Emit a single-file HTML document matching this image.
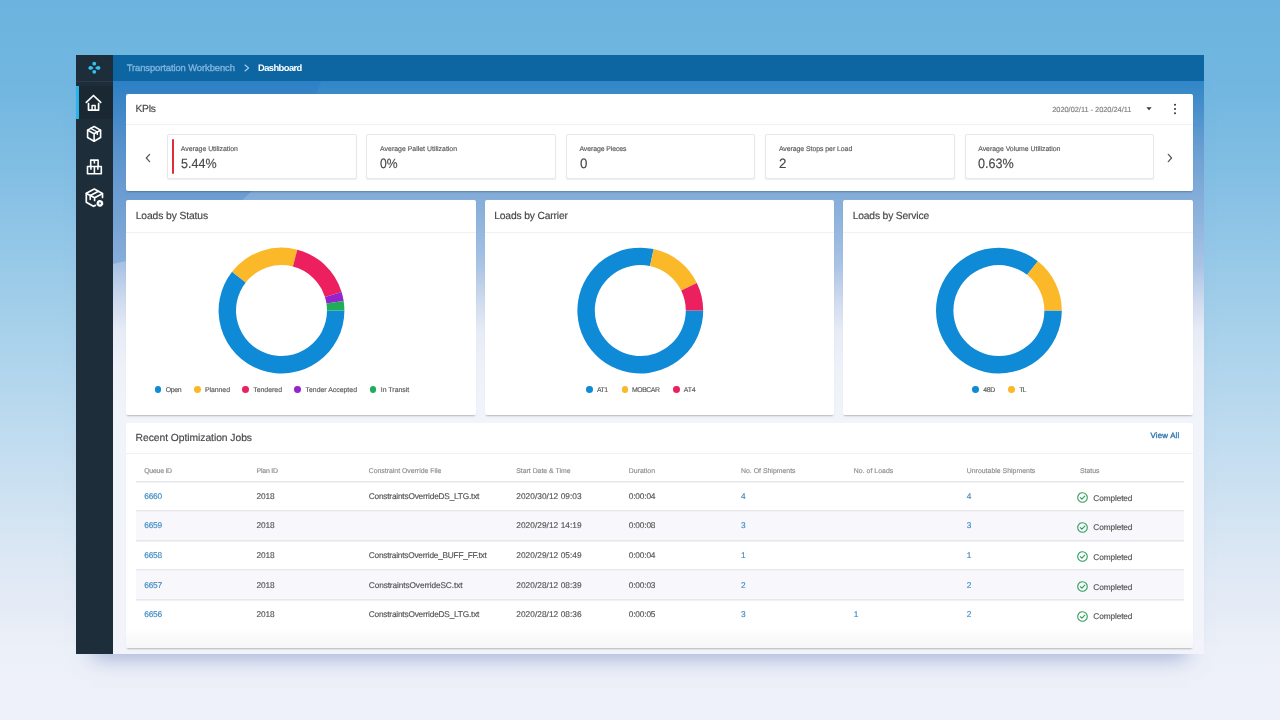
<!DOCTYPE html>
<html lang="en"><head><meta charset="utf-8"><title>Transportation Workbench - Dashboard</title><style>
*{box-sizing:border-box;margin:0;padding:0}
html,body{width:1280px;height:720px;overflow:hidden}
body{font-family:'Liberation Sans',sans-serif;background:linear-gradient(180deg,#6cb4df 0px,#70b6e0 80px,#84bfe4 180px,#99cae8 270px,#aed4ec 360px,#c3ddf0 450px,#d8e6f3 540px,#e4ebf6 600px,#ecf0f8 650px,#eff1fa 720px);position:relative;-webkit-font-smoothing:antialiased}
.app{position:absolute;will-change:transform;box-shadow:0 21px 20px -17px rgba(104,124,190,.55)}
.sidebar{position:absolute;left:0;top:0;bottom:0;background:#1d2d3a;z-index:2}
.logo{position:absolute;left:0;top:0;width:37px;height:27px;border-bottom:1px solid #2c3a48}
.nav{position:absolute;left:0;width:37px;height:33px;display:block}
.nav svg{position:absolute;left:0;top:0}
.nav.active{background:#1a2833}
.nav.active:before{content:"";position:absolute;left:0;top:0;width:3px;height:33px;background:#27b5ea}
.topbar{position:absolute;top:0;right:0;background:#0d65a2;box-shadow:0 1px 0 rgba(13,101,162,.3)}
.main{position:absolute;right:0;bottom:0;overflow:hidden;background:linear-gradient(180deg,#3087c8 0px,#3b8ac8 13px,#6b9fd2 69px,#80abd8 109px,#94b7de 149px,#a9c3e5 184px,#cedaee 219px,#e6ebf6 249px,#eff1f9 284px,#f2f4fb 339px,#f3f4fb 573px)}
.blob{position:absolute;left:-328px;top:-362px;width:550px;height:550px;border-radius:50%;background:rgba(38,108,190,.24)}
.card{position:absolute;background:#fff;border-radius:2px;box-shadow:0 2px 2px -1px rgba(0,0,0,.26)}
.card h2,.card span,.card a,.topbar span{position:absolute;white-space:pre;font-weight:400;text-decoration:none;text-rendering:geometricPrecision}
.tcard{background:linear-gradient(180deg,#fff 0,#fff 205px,#f6f6f7 100%)}
.abs{position:absolute}
.card span,.card a,.card h2{-webkit-text-stroke:.16px currentColor}
.med,.card .med{-webkit-text-stroke:.35px currentColor}
.hr{position:absolute;left:0;right:0;height:1px;background:#f0f1f3}
.tile{position:absolute;background:#fff;border:1px solid #e7e8ea;border-radius:2px;box-shadow:0 1px 1.5px rgba(0,0,0,.08)}
.bar{position:absolute;left:4px;top:3.8px;width:2px;height:35px;background:#e02c3c;border-radius:1px}
.donut{position:absolute;left:0;top:0}
.legend{list-style:none}
.dot{position:absolute;width:6.8px;height:6.8px;border-radius:50%}
.table{position:absolute}
.thead{position:absolute;left:0;top:0;right:0;border-bottom:1px solid #e8e8ec}
.tr{position:absolute;left:0;right:0;border-bottom:1px solid #e8e8ec;box-shadow:inset 0 1px 0 #f1f1f4}
.tr.alt{background:#f8f8fc}
.tr.last{border-bottom:0}
</style></head><body><div class="app" style="left:76px;top:55px;width:1128px;height:599px"><aside class="sidebar" style="width:37px"><div class="logo"><svg width="37" height="26" viewBox="0 0 37 26"><g fill="#35c3ee" transform="translate(0 .3)"><circle cx="18.25" cy="8.4" r="1.9"/><circle cx="18.25" cy="16.5" r="1.9"/><path d="M12.4 12.6c0-1.1 .9-1.9 2-1.9c1.2 0 2.2 1 3.1 1.9c-.9 .9-1.9 1.9-3.1 1.9c-1.1 0-2-.8-2-1.9z"/><path d="M24.4 12.6c0-1.1-.9-1.9-2-1.9c-1.2 0-2.3 1-3.3 1.9c1 .9 2.1 1.9 3.3 1.9c1.1 0 2-.8 2-1.9z"/></g></svg></div><nav><a class="nav active" style="top:31px"><svg width="37" height="33" viewBox="0 0 37 33" fill="none" stroke="#fff" stroke-width="1.7" stroke-linecap="round" stroke-linejoin="round"><path d="M10.3 16.4L17.5 9.5L24.7 16.4"/><path d="M12.5 17.6V24.1H22.6V17.6"/><path d="M16.1 24V19.6H19.1V24" stroke-width="1.5"/></svg></a><a class="nav" style="top:62px"><svg width="37" height="33" viewBox="0 0 37 33" fill="none" stroke="#fff" stroke-width="1.6" stroke-linecap="round" stroke-linejoin="round"><path d="M18.1 9.5L24.6 13.1V20.5L18.1 24.2L11.6 20.5V13.1Z"/><path d="M11.8 13.2L18.1 16.8L24.4 13.2M18.1 16.8V24"/><path d="M14.7 11.3L21.3 15V17.4" stroke-width="1.4"/></svg></a><a class="nav" style="top:94px"><svg width="37" height="33" viewBox="0 -0.2 37 33" fill="none" stroke="#fff" stroke-width="1.6" stroke-linejoin="round"><path d="M14.7 17.2V10.9H22.1V17.2"/><path d="M11.5 17.3H25.3V24.5H11.5Z"/><path d="M18.4 17.3V24.5"/><path d="M18.4 10.9V14.2M14.95 17.3V20.6M21.85 17.3V20.6" stroke-width="1.6"/></svg></a><a class="nav" style="top:125px"><svg width="37" height="35" viewBox="0 0 37 35" fill="none" stroke="#fff" stroke-width="1.7" stroke-linecap="round" stroke-linejoin="round"><path d="M19.4 25.4L17.4 26.3L10.3 22.3V13.2L18.3 9.1L26.5 13.5V17.4"/><path d="M10.5 13.4L18.6 17.8L26.3 13.7M18.6 17.8V20.4"/><path d="M14.4 15.5L22.4 11.3"/><path d="M14.2 16.6V19.6" stroke-width="1.5"/><circle cx="23.9" cy="23.4" r="2.5" fill="#fff" stroke="#fff" stroke-width="1.8" stroke-dasharray="1.3 .9"/><circle cx="23.9" cy="23.4" r="1.15" fill="#56616c" stroke="none"/></svg></a></nav></aside><header class="topbar" style="left:37px;height:26px"><span class="med" style="left:13.75px;top:6px;font-size:9.4px;line-height:14px;color:#7fb4dc;letter-spacing:-0.08px;">Transportation Workbench</span><svg class="abs" width="8" height="10" viewBox="0 0 8 10" style="left:129.6px;top:7.5px"><path d="M2 2L5.6 5L2 8" fill="none" stroke="#a9cde9" stroke-width="1.1" stroke-linecap="round" stroke-linejoin="round"/></svg><span style="left:145px;top:6px;font-size:9.4px;line-height:14px;color:#ffffff;font-weight:700;letter-spacing:-0.58px;">Dashboard</span></header><main class="main" style="left:37px;top:26px"><div class="blob"></div><section class="card" style="left:13px;top:13px;width:1067px;height:97px"><h2 style="left:9.6px;top:8px;font-size:10.3px;line-height:15px;color:#484848;letter-spacing:-0.45px;">KPIs</h2><span style="left:926.2px;top:10px;font-size:7.4px;line-height:11px;color:#828282;letter-spacing:-0.01px;">2020/02/11 - 2020/24/11</span><svg class="abs" width="8" height="6" viewBox="0 0 8 6" style="left:1019.3px;top:12px"><path d="M1.3 1.3H6.7L4 4.3Z" fill="#3a3a3a"/></svg><svg class="abs" width="6" height="14" viewBox="0 0 6 14" style="left:1046.4px;top:8.3px"><g fill="#3a3a3a"><circle cx="3" cy="2.8" r="1.05"/><circle cx="3" cy="7" r="1.05"/><circle cx="3" cy="11.2" r="1.05"/></g></svg><div class="hr" style="top:30.2px"></div><svg class="abs" width="8" height="12" viewBox="0 0 8 12" style="left:17.9px;top:58.4px"><path d="M5.6 2.3L2.3 6L5.6 9.7" fill="none" stroke="#5a5a5a" stroke-width="1.25" stroke-linecap="round" stroke-linejoin="round"/></svg><svg class="abs" width="8" height="12" viewBox="0 0 8 12" style="left:1040.3px;top:58.3px"><path d="M2.3 2.3L5.6 6L2.3 9.7" fill="none" stroke="#5a5a5a" stroke-width="1.25" stroke-linecap="round" stroke-linejoin="round"/></svg><div class="tile" style="left:41.1px;top:40.4px;width:189.6px;height:44.2px"><i class="bar"></i><span style="left:12.7px;top:9.6px;font-size:6.9px;line-height:10px;color:#5a5a5a;letter-spacing:-0.01px;">Average Utilization</span><span style="left:12.9px;top:18.6px;font-size:13.5px;line-height:19px;color:#484848;transform:scaleX(0.930);transform-origin:0 50%;">5.44%</span></div><div class="tile" style="left:240.4px;top:40.4px;width:189.6px;height:44.2px"><span style="left:12.7px;top:9.6px;font-size:6.9px;line-height:10px;color:#5a5a5a;letter-spacing:0.02px;">Average Pallet Utilization</span><span style="left:12.9px;top:18.6px;font-size:13.5px;line-height:19px;color:#484848;transform:scaleX(0.902);transform-origin:0 50%;">0%</span></div><div class="tile" style="left:439.8px;top:40.4px;width:189.6px;height:44.2px"><span style="left:12.7px;top:9.6px;font-size:6.9px;line-height:10px;color:#5a5a5a;letter-spacing:-0.09px;">Average Pieces</span><span style="left:12.9px;top:18.6px;font-size:13.5px;line-height:19px;color:#484848;transform:scaleX(0.985);transform-origin:0 50%;">0</span></div><div class="tile" style="left:639.2px;top:40.4px;width:189.6px;height:44.2px"><span style="left:12.7px;top:9.6px;font-size:6.9px;line-height:10px;color:#5a5a5a;letter-spacing:-0.04px;">Average Stops per Load</span><span style="left:12.9px;top:18.6px;font-size:13.5px;line-height:19px;color:#484848;transform:scaleX(0.985);transform-origin:0 50%;">2</span></div><div class="tile" style="left:838.5px;top:40.4px;width:189.6px;height:44.2px"><span style="left:12.7px;top:9.6px;font-size:6.9px;line-height:10px;color:#5a5a5a;">Average Volume Utilization</span><span style="left:12.9px;top:18.6px;font-size:13.5px;line-height:19px;color:#484848;transform:scaleX(0.935);transform-origin:0 50%;">0.63%</span></div></section><section class="card" style="left:13px;top:119.25px;width:349.75px;height:214.5px"><h2 style="left:9.7px;top:8.75px;font-size:10.3px;line-height:15px;color:#484848;letter-spacing:-0.1px;">Loads by Status</h2><div class="hr" style="top:31.95px"></div><svg class="donut" width="349.75" height="214.5" viewBox="0 0 349.75 214.5"><path d="M218.40 110.55A62.9 62.9 0 1 1 106.07 71.65L119.74 82.41A45.5 45.5 0 1 0 201.00 110.55Z" fill="#0e8ad6"/><path d="M106.07 71.65A62.9 62.9 0 0 1 171.25 49.65L166.89 66.50A45.5 45.5 0 0 0 119.74 82.41Z" fill="#fbb829"/><path d="M171.25 49.65A62.9 62.9 0 0 1 215.59 91.95L198.97 97.10A45.5 45.5 0 0 0 166.89 66.50Z" fill="#ec205e"/><path d="M215.59 91.95A62.9 62.9 0 0 1 217.66 100.93L200.46 103.59A45.5 45.5 0 0 0 198.97 97.10Z" fill="#9424cd"/><path d="M217.66 100.93A62.9 62.9 0 0 1 218.40 110.55L201.00 110.55A45.5 45.5 0 0 0 200.46 103.59Z" fill="#20ad5a"/></svg><ul class="legend"><li><i class="dot" style="left:28.6px;top:185.95px;background:#0e8ad6"></i><span style="left:39.8px;top:185.75px;font-size:6.9px;line-height:10px;color:#5a5a5a;letter-spacing:-0.32px;">Open</span></li><li><i class="dot" style="left:68.1px;top:185.95px;background:#fbb829"></i><span style="left:79px;top:185.75px;font-size:6.9px;line-height:10px;color:#5a5a5a;letter-spacing:-0.05px;">Planned</span></li><li><i class="dot" style="left:116.35px;top:185.95px;background:#ec205e"></i><span style="left:127.25px;top:185.75px;font-size:6.9px;line-height:10px;color:#5a5a5a;">Tendered</span></li><li><i class="dot" style="left:168.1px;top:185.95px;background:#9424cd"></i><span style="left:179.5px;top:185.75px;font-size:6.9px;line-height:10px;color:#5a5a5a;letter-spacing:0.01px;">Tender Accepted</span></li><li><i class="dot" style="left:243.6px;top:185.95px;background:#20ad5a"></i><span style="left:254.75px;top:185.75px;font-size:6.9px;line-height:10px;color:#5a5a5a;letter-spacing:0.02px;">In Transit</span></li></ul></section><section class="card" style="left:371.5px;top:119.25px;width:349.75px;height:214.5px"><h2 style="left:9.7px;top:8.75px;font-size:10.3px;line-height:15px;color:#484848;letter-spacing:-0.16px;">Loads by Carrier</h2><div class="hr" style="top:31.95px"></div><svg class="donut" width="349.75" height="214.5" viewBox="0 0 349.75 214.5"><path d="M218.20 110.55A62.9 62.9 0 1 1 168.70 49.09L164.99 66.09A45.5 45.5 0 1 0 200.80 110.55Z" fill="#0e8ad6"/><path d="M168.70 49.09A62.9 62.9 0 0 1 211.83 82.98L196.20 90.60A45.5 45.5 0 0 0 164.99 66.09Z" fill="#fbb829"/><path d="M211.83 82.98A62.9 62.9 0 0 1 218.20 110.55L200.80 110.55A45.5 45.5 0 0 0 196.20 90.60Z" fill="#ec205e"/></svg><ul class="legend"><li><i class="dot" style="left:101.35px;top:185.95px;background:#0e8ad6"></i><span style="left:112.5px;top:185.75px;font-size:6.9px;line-height:10px;color:#5a5a5a;letter-spacing:-0.57px;">AT1</span></li><li><i class="dot" style="left:137.1px;top:185.95px;background:#fbb829"></i><span style="left:147.5px;top:185.75px;font-size:6.9px;line-height:10px;color:#5a5a5a;letter-spacing:-0.45px;">MOBCAR</span></li><li><i class="dot" style="left:188.35px;top:185.95px;background:#ec205e"></i><span style="left:199.25px;top:185.75px;font-size:6.9px;line-height:10px;color:#5a5a5a;letter-spacing:-0.2px;">AT4</span></li></ul></section><section class="card" style="left:730px;top:119.25px;width:350px;height:214.5px"><h2 style="left:9.7px;top:8.75px;font-size:10.3px;line-height:15px;color:#484848;letter-spacing:-0.17px;">Loads by Service</h2><div class="hr" style="top:31.95px"></div><svg class="donut" width="350" height="214.5" viewBox="0 0 350 214.5"><path d="M218.80 110.55A62.9 62.9 0 1 1 194.88 61.19L184.10 74.84A45.5 45.5 0 1 0 201.40 110.55Z" fill="#0e8ad6"/><path d="M194.88 61.19A62.9 62.9 0 0 1 218.80 110.55L201.40 110.55A45.5 45.5 0 0 0 184.10 74.84Z" fill="#fbb829"/></svg><ul class="legend"><li><i class="dot" style="left:129.1px;top:185.95px;background:#0e8ad6"></i><span style="left:140.25px;top:185.75px;font-size:6.9px;line-height:10px;color:#5a5a5a;letter-spacing:-0.33px;">48D</span></li><li><i class="dot" style="left:164.85px;top:185.95px;background:#fbb829"></i><span style="left:176.25px;top:185.75px;font-size:6.9px;line-height:10px;color:#5a5a5a;letter-spacing:-0.9px;">TL</span></li></ul></section><section class="card tcard" style="left:13px;top:342px;width:1067px;height:224.5px"><h2 style="left:9.6px;top:8px;font-size:10.3px;line-height:15px;color:#484848;letter-spacing:-0.04px;">Recent Optimization Jobs</h2><a class="med" style="left:1024.5px;top:7px;font-size:7.8px;line-height:11px;color:#3079b2;letter-spacing:0.23px;">View All</a><div class="hr" style="top:29.8px"></div><div class="table" style="left:10.25px;top:37px;width:1047.5px"><div class="thead" style="height:21.5px"><span style="left:8px;top:7px;font-size:6.9px;line-height:10px;color:#8e8e8e;letter-spacing:-0.24px;">Queue ID</span><span style="left:120.25px;top:7px;font-size:6.9px;line-height:10px;color:#8e8e8e;letter-spacing:-0.18px;">Plan ID</span><span style="left:232.5px;top:7px;font-size:6.9px;line-height:10px;color:#8e8e8e;letter-spacing:-0.01px;">Constraint Override File</span><span style="left:380px;top:7px;font-size:6.9px;line-height:10px;color:#8e8e8e;letter-spacing:-0.01px;">Start Date &amp; Time</span><span style="left:492.5px;top:7px;font-size:6.9px;line-height:10px;color:#8e8e8e;letter-spacing:0.04px;">Duration</span><span style="left:604.75px;top:7px;font-size:6.9px;line-height:10px;color:#8e8e8e;letter-spacing:0.01px;">No. Of Shipments</span><span style="left:717.5px;top:7px;font-size:6.9px;line-height:10px;color:#8e8e8e;letter-spacing:0.04px;">No. of Loads</span><span style="left:830.5px;top:7px;font-size:6.9px;line-height:10px;color:#8e8e8e;letter-spacing:0.02px;">Unroutable Shipments</span><span style="left:943.75px;top:7px;font-size:6.9px;line-height:10px;color:#8e8e8e;letter-spacing:-0.01px;">Status</span></div><div class="tr" style="top:21.5px;height:29.5px"><a style="left:8px;top:8.5px;font-size:8.3px;line-height:12px;color:#438bc2;letter-spacing:-0.19px;">6660</a><span style="left:120.25px;top:8.5px;font-size:8.3px;line-height:12px;color:#565656;letter-spacing:-0.09px;">2018</span><span style="left:232.5px;top:8.5px;font-size:8.3px;line-height:12px;color:#565656;letter-spacing:-0.21px;">ConstraintsOverrideDS_LTG.txt</span><span style="left:380px;top:8.5px;font-size:8.3px;line-height:12px;color:#565656;letter-spacing:0.05px;">2020/30/12 09:03</span><span style="left:492.5px;top:8.5px;font-size:8.3px;line-height:12px;color:#565656;letter-spacing:-0.16px;">0:00:04</span><a style="left:604.75px;top:8.5px;font-size:8.3px;line-height:12px;color:#438bc2;">4</a><a style="left:830.5px;top:8.5px;font-size:8.3px;line-height:12px;color:#438bc2;">4</a><span style="left:957.05px;top:10.5px;font-size:8.3px;line-height:12px;color:#565656;letter-spacing:-0.12px;">Completed</span><svg class="abs" width="13" height="13" viewBox="0 0 13 13" style="left:940.15px;top:9.7px"><circle cx="6.5" cy="6.5" r="4.8" fill="none" stroke="#2e9e5b" stroke-width="1.1"/><path d="M4.3 6.6L5.9 8.2L8.8 5.1" fill="none" stroke="#2e9e5b" stroke-width="1.1" stroke-linecap="round" stroke-linejoin="round"/></svg></div><div class="tr alt" style="top:51px;height:29.6px"><a style="left:8px;top:8px;font-size:8.3px;line-height:12px;color:#438bc2;letter-spacing:-0.19px;">6659</a><span style="left:120.25px;top:8px;font-size:8.3px;line-height:12px;color:#565656;letter-spacing:-0.09px;">2018</span><span style="left:380px;top:8px;font-size:8.3px;line-height:12px;color:#565656;letter-spacing:0.05px;">2020/29/12 14:19</span><span style="left:492.5px;top:8px;font-size:8.3px;line-height:12px;color:#565656;letter-spacing:-0.16px;">0:00:08</span><a style="left:604.75px;top:8px;font-size:8.3px;line-height:12px;color:#438bc2;">3</a><a style="left:830.5px;top:8px;font-size:8.3px;line-height:12px;color:#438bc2;">3</a><span style="left:957.05px;top:10px;font-size:8.3px;line-height:12px;color:#565656;letter-spacing:-0.12px;">Completed</span><svg class="abs" width="13" height="13" viewBox="0 0 13 13" style="left:940.15px;top:9.8px"><circle cx="6.5" cy="6.5" r="4.8" fill="none" stroke="#2e9e5b" stroke-width="1.1"/><path d="M4.3 6.6L5.9 8.2L8.8 5.1" fill="none" stroke="#2e9e5b" stroke-width="1.1" stroke-linecap="round" stroke-linejoin="round"/></svg></div><div class="tr" style="top:80.6px;height:29.5px"><a style="left:8px;top:8.4px;font-size:8.3px;line-height:12px;color:#438bc2;letter-spacing:-0.19px;">6658</a><span style="left:120.25px;top:8.4px;font-size:8.3px;line-height:12px;color:#565656;letter-spacing:-0.09px;">2018</span><span style="left:232.5px;top:8.4px;font-size:8.3px;line-height:12px;color:#565656;letter-spacing:-0.23px;">ConstraintsOverride_BUFF_FF.txt</span><span style="left:380px;top:8.4px;font-size:8.3px;line-height:12px;color:#565656;letter-spacing:0.05px;">2020/29/12 05:49</span><span style="left:492.5px;top:8.4px;font-size:8.3px;line-height:12px;color:#565656;letter-spacing:-0.16px;">0:00:04</span><a style="left:604.75px;top:8.4px;font-size:8.3px;line-height:12px;color:#438bc2;">1</a><a style="left:830.5px;top:8.4px;font-size:8.3px;line-height:12px;color:#438bc2;">1</a><span style="left:957.05px;top:10.4px;font-size:8.3px;line-height:12px;color:#565656;letter-spacing:-0.12px;">Completed</span><svg class="abs" width="13" height="13" viewBox="0 0 13 13" style="left:940.15px;top:9.8px"><circle cx="6.5" cy="6.5" r="4.8" fill="none" stroke="#2e9e5b" stroke-width="1.1"/><path d="M4.3 6.6L5.9 8.2L8.8 5.1" fill="none" stroke="#2e9e5b" stroke-width="1.1" stroke-linecap="round" stroke-linejoin="round"/></svg></div><div class="tr alt" style="top:110.1px;height:29.5px"><a style="left:8px;top:8.9px;font-size:8.3px;line-height:12px;color:#438bc2;letter-spacing:-0.19px;">6657</a><span style="left:120.25px;top:8.9px;font-size:8.3px;line-height:12px;color:#565656;letter-spacing:-0.09px;">2018</span><span style="left:232.5px;top:8.9px;font-size:8.3px;line-height:12px;color:#565656;letter-spacing:-0.11px;">ConstraintsOverrideSC.txt</span><span style="left:380px;top:8.9px;font-size:8.3px;line-height:12px;color:#565656;letter-spacing:0.05px;">2020/28/12 08:39</span><span style="left:492.5px;top:8.9px;font-size:8.3px;line-height:12px;color:#565656;letter-spacing:-0.16px;">0:00:03</span><a style="left:604.75px;top:8.9px;font-size:8.3px;line-height:12px;color:#438bc2;">2</a><a style="left:830.5px;top:8.9px;font-size:8.3px;line-height:12px;color:#438bc2;">2</a><span style="left:957.05px;top:10.9px;font-size:8.3px;line-height:12px;color:#565656;letter-spacing:-0.12px;">Completed</span><svg class="abs" width="13" height="13" viewBox="0 0 13 13" style="left:940.15px;top:9.9px"><circle cx="6.5" cy="6.5" r="4.8" fill="none" stroke="#2e9e5b" stroke-width="1.1"/><path d="M4.3 6.6L5.9 8.2L8.8 5.1" fill="none" stroke="#2e9e5b" stroke-width="1.1" stroke-linecap="round" stroke-linejoin="round"/></svg></div><div class="tr last" style="top:139.6px;height:29.4px"><a style="left:8px;top:8.4px;font-size:8.3px;line-height:12px;color:#438bc2;letter-spacing:-0.19px;">6656</a><span style="left:120.25px;top:8.4px;font-size:8.3px;line-height:12px;color:#565656;letter-spacing:-0.09px;">2018</span><span style="left:232.5px;top:8.4px;font-size:8.3px;line-height:12px;color:#565656;letter-spacing:-0.21px;">ConstraintsOverrideDS_LTG.txt</span><span style="left:380px;top:8.4px;font-size:8.3px;line-height:12px;color:#565656;letter-spacing:0.05px;">2020/28/12 08:36</span><span style="left:492.5px;top:8.4px;font-size:8.3px;line-height:12px;color:#565656;letter-spacing:-0.16px;">0:00:05</span><a style="left:604.75px;top:8.4px;font-size:8.3px;line-height:12px;color:#438bc2;">3</a><a style="left:717.5px;top:8.4px;font-size:8.3px;line-height:12px;color:#438bc2;">1</a><a style="left:830.5px;top:8.4px;font-size:8.3px;line-height:12px;color:#438bc2;">2</a><span style="left:957.05px;top:10.4px;font-size:8.3px;line-height:12px;color:#565656;letter-spacing:-0.12px;">Completed</span><svg class="abs" width="13" height="13" viewBox="0 0 13 13" style="left:940.15px;top:10px"><circle cx="6.5" cy="6.5" r="4.8" fill="none" stroke="#2e9e5b" stroke-width="1.1"/><path d="M4.3 6.6L5.9 8.2L8.8 5.1" fill="none" stroke="#2e9e5b" stroke-width="1.1" stroke-linecap="round" stroke-linejoin="round"/></svg></div></div></section></main></div></body></html>
